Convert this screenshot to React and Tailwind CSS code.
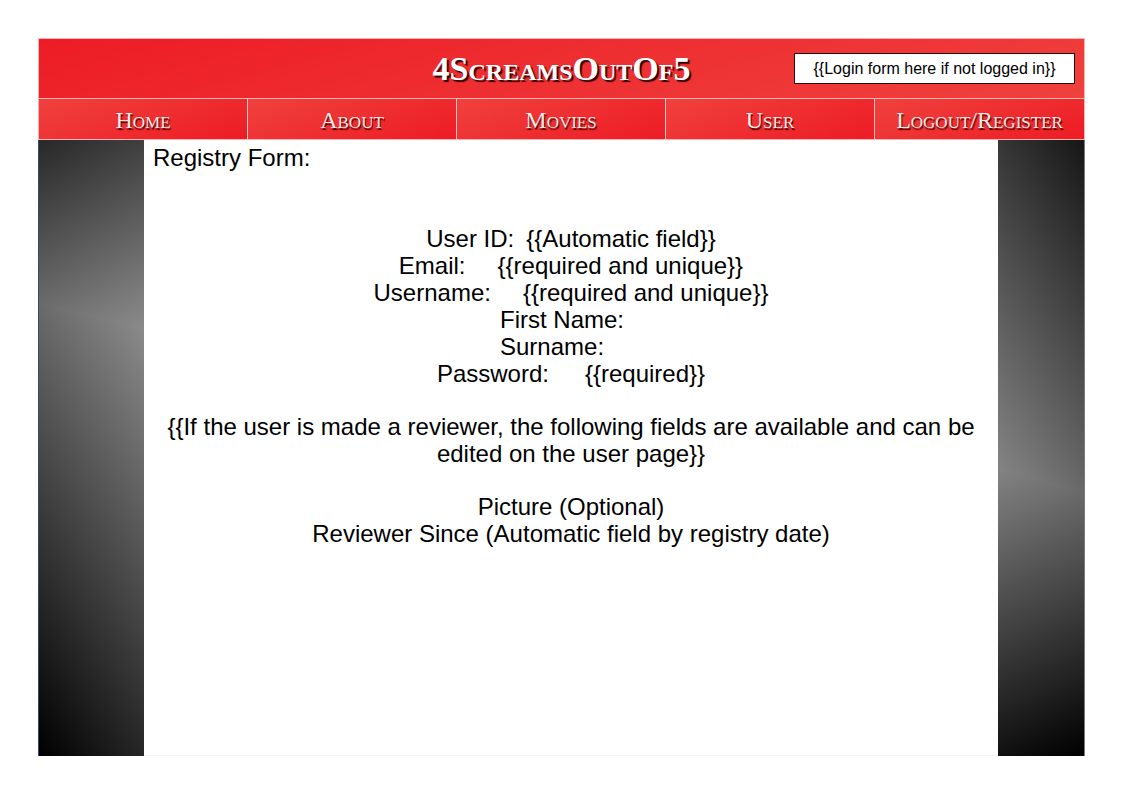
const links = ["Home", "About", "Movies", "User", "Logout/Register"];

const fields = [
  { label: "User ID:", note: "{{Automatic field}}", gap: "gap-3" },
  { label: "Email:", note: "{{required and unique}}", gap: "gap-8" },
  { label: "Username:", note: "{{required and unique}}", gap: "gap-8" },
  { label: "First Name:" },
  { label: "Surname:" },
  { label: "Password:", note: "{{required}}", gap: "gap-9" },
];

function Header() {
  return (
    <header className="grid h-[60px] grid-cols-[1fr_auto_1fr] items-center border-x border-t border-[#f9b4b6] bg-linear-[165deg,#ed1c24,#ef413d] px-[9px]">
      <h1 className="col-start-2 font-['Liberation_Serif',serif] text-[34px] leading-[36px] font-bold text-white [font-variant-caps:small-caps] [text-shadow:2px_2px_1px_#2a0405]">
        4ScreamsOutOf5
      </h1>
      <div className="flex h-[31px] w-[281px] items-center justify-center justify-self-end border border-[#2b0a0b] bg-white text-base text-black">
        {"{{Login form here if not logged in}}"}
      </div>
    </header>
  );
}

function Nav() {
  return (
    <nav className="grid h-[42px] grid-cols-5 divide-x divide-[#fbc5c6] border border-[#f9b4b6]">
      {links.map((name) => (
        <a
          key={name}
          href="#"
          className="flex items-center justify-center bg-linear-[160deg,#f0413e,#ed1c24] pt-px font-['Liberation_Serif',serif] text-[24px] leading-[28px] text-[#ffe9e6] [font-variant-caps:small-caps] [text-shadow:1px_2px_1px_#3a0506]"
        >
          {name}
        </a>
      ))}
    </nav>
  );
}

function RegistryForm() {
  return (
    <main className="flex-1 border-b border-[#f2f2f2] px-[9px] pt-1 text-2xl leading-[27px] text-black">
      <h2>Registry Form:</h2>
      <dl className="mt-[54px]">
        {fields.map(({ label, note, gap }) =>
          note ? (
            <div key={label} className={`flex justify-center ${gap}`}>
              <dt>{label}</dt>
              <dd>{note}</dd>
            </div>
          ) : (
            <div key={label} className="mx-auto w-[142px]">
              <dt>{label}</dt>
            </div>
          )
        )}
      </dl>
      <p className="mt-[26px] text-center">
        {"{{If the user is made a reviewer, the following fields are available and can be edited on the user page}}"}
      </p>
      <ul className="mt-[26px] text-center">
        <li>Picture (Optional)</li>
        <li>Reviewer Since (Automatic field by registry date)</li>
      </ul>
    </main>
  );
}

export default function App() {
  return (
    <div className="flex min-h-screen flex-col bg-white p-[38px] font-['Liberation_Sans',sans-serif]">
      <Header />
      <Nav />
      <div className="flex flex-1">
        <aside className="w-[106px] border-l border-[#34496e] bg-[linear-gradient(151deg,#282828_0px,#ffffff_470px),linear-gradient(57deg,#000000_0px,#ffffff_594px)] bg-blend-darken" />
        <RegistryForm />
        <aside className="w-[87px] border-r border-[#777b80] bg-[linear-gradient(334deg,#000000_0px,#ffffff_575px),linear-gradient(238deg,#161616_0px,#ffffff_527px)] bg-blend-darken" />
      </div>
    </div>
  );
}
